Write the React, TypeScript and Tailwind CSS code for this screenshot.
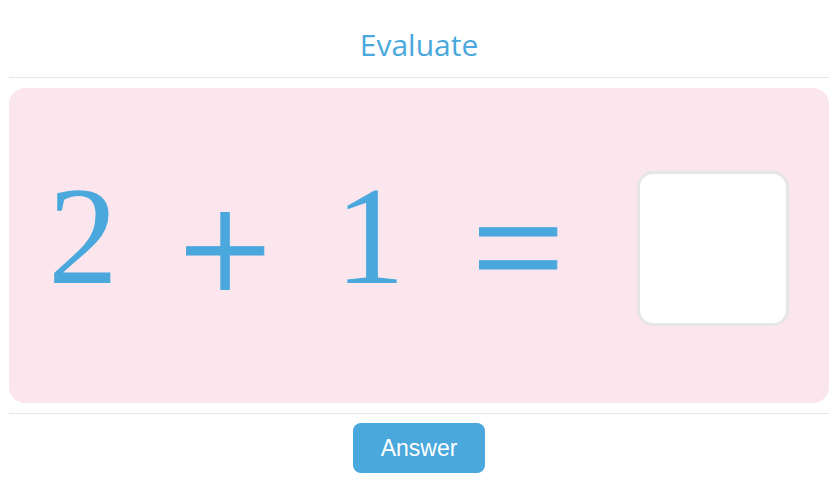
const serif = { fontFamily: '"Liberation Serif", "Times New Roman", serif' };

export default function App() {
  return (
    <div className="w-[840px] h-[501px] bg-white">
      <div className="mx-[9px] w-[820px]">
        <div className="h-[78px] border-b border-[#e6e6e6] flex items-center justify-center">
          <h1
            className="text-[30px] text-[#4aa8dc] leading-none mt-[12px]"
            style={{ fontFamily: '"Open Sans", sans-serif' }}
          >
            Evaluate
          </h1>
        </div>

        <div className="mt-[10px] h-[315px] rounded-[16px] bg-[#fce6ee] flex items-center pl-[24px]">
          <span className="w-[100px] text-center text-[140px] leading-none text-[#4aa8dc] mb-[20px]" style={serif}>
            2
          </span>
          <span className="w-[100px] ml-[42px] text-center text-[166px] leading-none text-[#4aa8dc] mt-[8px] [-webkit-text-stroke:1px_#4aa8dc]" style={serif}>
            +
          </span>
          <span className="w-[100px] ml-[45px] text-center text-[140px] leading-none text-[#4aa8dc] mb-[20px]" style={serif}>
            1
          </span>
          <span className="w-[100px] ml-[48px] text-center text-[166px] leading-none text-[#4aa8dc] mt-[2px] [-webkit-text-stroke:1px_#4aa8dc]" style={serif}>
            =
          </span>
          <div className="ml-[69px] mt-[6px] w-[152px] h-[155px] rounded-[16px] bg-white border-[3px] border-[#e5e5ea]" />
        </div>

        <div className="mt-[10px] border-t border-[#e6e6e6] flex justify-center pt-[9px]">
          <button
            className="w-[132px] h-[50px] rounded-[8px] bg-[#4aa8dc] text-white text-[23px]"
            style={{ fontFamily: '"Liberation Sans", Arial, sans-serif' }}
          >
            Answer
          </button>
        </div>
      </div>
    </div>
  );
}
